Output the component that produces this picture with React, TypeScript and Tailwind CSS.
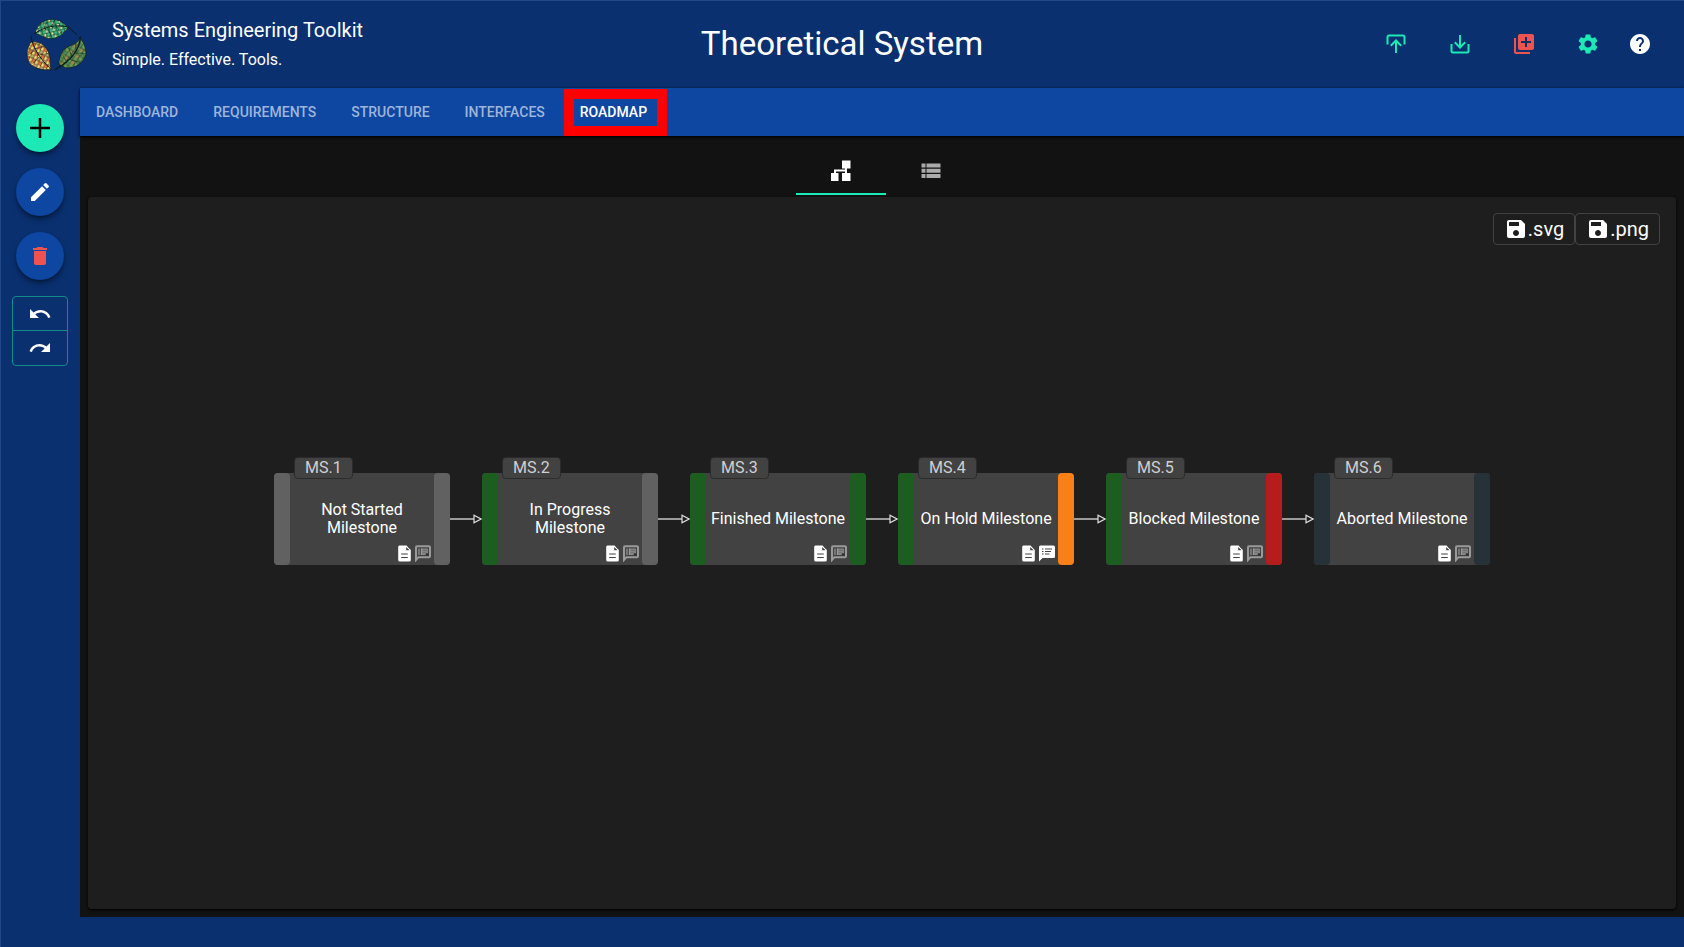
import { useState, JSX } from "react";
import { MdDelete, MdEdit, MdHelp, MdLibraryAdd, MdRedo, MdSave, MdSettings, MdUndo } from "react-icons/md";

interface Milestone {
  id: string;
  name: string;
  startColor: string;
  endColor: string;
  hasComments: boolean;
}

const TABS: string[] = ["Dashboard", "Requirements", "Structure", "Interfaces", "Roadmap"];

const MILESTONES: Milestone[] = [
  { id: "MS.1", name: "Not Started Milestone", startColor: "bg-[#616161]", endColor: "bg-[#616161]", hasComments: false },
  { id: "MS.2", name: "In Progress Milestone", startColor: "bg-[#1b5e20]", endColor: "bg-[#616161]", hasComments: false },
  { id: "MS.3", name: "Finished Milestone", startColor: "bg-[#1b5e20]", endColor: "bg-[#1b5e20]", hasComments: false },
  { id: "MS.4", name: "On Hold Milestone", startColor: "bg-[#1b5e20]", endColor: "bg-[#f98017]", hasComments: true },
  { id: "MS.5", name: "Blocked Milestone", startColor: "bg-[#1b5e20]", endColor: "bg-[#b71c1c]", hasComments: false },
  { id: "MS.6", name: "Aborted Milestone", startColor: "bg-[#263238]", endColor: "bg-[#263238]", hasComments: false },
];

function Logo(): JSX.Element {
  return (
    <svg width="80" height="70" viewBox="4 -4 240 210" aria-hidden="true">
      <defs>
        <pattern id="greenCells" width="22" height="20" patternUnits="userSpaceOnUse" patternTransform="rotate(-14)">
          <rect width="22" height="20" fill="#1d5340" />
          <path d="M0 1l9 0-1 8-8 1zM11 11l8-1 2 8-9 2z" fill="#3cb981" />
          <path d="M10 1l6 1-1 7-6-1zM1 12l8-1-1 7-6 1z" fill="#e3e39a" />
          <path d="M17 1l4 2-1 6-4-1z" fill="#2f9d6c" />
        </pattern>
        <pattern id="autumnCells" width="20" height="22" patternUnits="userSpaceOnUse" patternTransform="rotate(24)">
          <rect width="20" height="22" fill="#6b4a2c" />
          <path d="M0 1l8 1-1 8-7 1zM10 12l8-1 1 8-8 2z" fill="#f3dc78" />
          <path d="M10 1l8 1-1 8-7 1z" fill="#e8703c" />
          <path d="M1 13l7-1-1 8-6 1z" fill="#c3bd80" />
        </pattern>
        <pattern id="oliveCells" width="24" height="22" patternUnits="userSpaceOnUse" patternTransform="rotate(35)">
          <rect width="24" height="22" fill="#3a4c2c" />
          <path d="M0 1l11 1-1 9-9 1zM12 12l10-1 1 9-10 1z" fill="#67a058" />
          <path d="M13 1l9 1-1 8-9 1z" fill="#9c8f50" />
          <path d="M1 13l10-1-1 9-8 1z" fill="#4b8f5a" />
        </pattern>
      </defs>
      <g stroke="#0c1a1c" strokeWidth="2" strokeLinejoin="round" strokeLinecap="round">
        <path d="M61 69C68 42 88 27 112 27C134 27 148 38 160 52C146 72 128 85 108 85C88 85 76 72 61 69Z" fill="url(#greenCells)" />
        <path d="M61 69C92 48 125 42 160 50L186 72" fill="none" strokeWidth="3" />
        <path d="M88 56l8-22M110 49l10-20M98 52l14 30M124 47l16 22" fill="none" strokeWidth="1.500" />
        <path d="M50 94C78 92 96 108 103 130C108 148 106 166 110 178C84 180 60 176 44 158C34 142 34 112 50 94Z" fill="url(#autumnCells)" />
        <path d="M49 78C52 98 62 132 110 178" fill="none" strokeWidth="3" />
        <path d="M58 116l32-8M68 134l34 -4M58 122l-18 12M72 142l-18 18" fill="none" strokeWidth="1.500" />
        <path d="M196 84C210 98 214 116 214 132C206 158 182 176 152 172L133 162C132 132 146 112 172 104C184 100 192 94 196 84Z" fill="url(#oliveCells)" />
        <path d="M197 80C196 112 176 146 122 178" fill="none" strokeWidth="4" />
        <path d="M186 124l-4-22M172 142l-10-30M156 156l-12-22M184 128l28 2M166 148l30 8" fill="none" strokeWidth="1.500" />
      </g>
    </svg>
  );
}

function ImportIcon(): JSX.Element {
  return (
    <svg width="24" height="24" viewBox="0 0 24 24" fill="none" stroke="currentColor" strokeWidth="2">
      <path d="M3.500 12.500V5Q3.500 3.500 5 3.500H19Q20.500 3.500 20.500 5V12.500" />
      <path d="M12 21V9M6.800 13.700L12 8.500L17.200 13.700" />
    </svg>
  );
}

function ExportIcon(): JSX.Element {
  return (
    <svg width="24" height="24" viewBox="0 0 24 24" fill="none" stroke="currentColor" strokeWidth="2">
      <path d="M3.500 12V19Q3.500 20.500 5 20.500H19Q20.500 20.500 20.500 19V12" />
      <path d="M12 3V15M6.800 10.300L12 15.500L17.200 10.300" />
    </svg>
  );
}

function TreeIcon(): JSX.Element {
  return (
    <svg width="24" height="24" viewBox="0 0 24 24" fill="currentColor">
      <path d="M13 1.500h8.500v8H18V14h3.500v8H13v-8h3v-1.500H7V14h2.500v8H2v-8h3v-3.500h11v-1h-3z" />
    </svg>
  );
}

function ListIcon(): JSX.Element {
  return (
    <svg width="24" height="24" viewBox="0 0 24 24" fill="currentColor">
      <path d="M2.500 4.500h4v4h-4zM7.500 4.500h14v4h-14zM2.500 9.800h4v4h-4zM7.500 9.800h14v4h-14zM2.500 15.100h4v4h-4zM7.500 15.100h14v4h-14z" />
    </svg>
  );
}

function DocumentIcon(): JSX.Element {
  return (
    <svg width="13" height="17" viewBox="0 0 13 17">
      <path d="M1.500 0.500H8.500L12.800 5V15Q12.800 16.500 11.300 16.500H1.700Q0.200 16.500 0.200 15V2Q0.200 0.500 1.500 0.500Z" fill="#fff" />
      <path d="M8.200 2V5.300H11.500Z" fill="#424242" />
      <path d="M3.200 9H9.800M3.200 12.500H9.800" stroke="#424242" strokeWidth="1.200" />
    </svg>
  );
}

function CommentIcon({ active }: { active: boolean }): JSX.Element {
  if (active) {
    return (
      <svg width="16" height="17" viewBox="0 0 16 17">
        <path d="M1.500 0.500H14.500Q16 0.500 16 2V11.500Q16 13 14.500 13H3.500L0 16.500V2Q0 0.500 1.500 0.500Z" fill="#fff" />
        <path d="M3 4H4.500M3 6.500H4.500M3 9H4.500M6 4H13M6 6.500H12M6 9H10.500" stroke="#424242" strokeWidth="1" />
      </svg>
    );
  }
  return (
    <svg width="16" height="17" viewBox="0 0 16 17" fill="none" stroke="#9a9a9a">
      <path d="M1 15V2.200Q1 1.300 2 1.300H14Q15 1.300 15 2.200V11.300Q15 12.200 14 12.200H3.500Z" strokeWidth="2" />
      <path d="M6 3.500H13V10H6Z" fill="#858585" stroke="none" />
      <path d="M4 3.500V10M6.500 3.500V10" strokeWidth="1.200" />
      <path d="M8 5.500H12M8 7.500H10.500" stroke="#6a6a6a" strokeWidth="0.800" />
      <path d="M10.800 8.300h2.500v2.200h-2.500z" fill="#2e2e2e" stroke="none" />
    </svg>
  );
}

function Arrow(): JSX.Element {
  return (
    <svg width="32" height="10" viewBox="0 0 32 10" className="shrink-0" fill="none" stroke="#e0e0e0">
      <path d="M0 5H24" strokeWidth="1.300" />
      <path d="M24 1.200L31 5L24 8.800Z" strokeWidth="1.200" />
    </svg>
  );
}

function MilestoneCard({ milestone }: { milestone: Milestone }): JSX.Element {
  return (
    <article className="relative flex h-[92px] w-44 shrink-0 rounded-sm bg-[#424242]">
      <span className={`w-4 shrink-0 rounded-sm ${milestone.startColor}`} />
      <h2 className="flex flex-1 items-center justify-center text-center text-base leading-[18px] text-white">
        {milestone.name}
      </h2>
      <span className={`w-4 shrink-0 rounded-sm ${milestone.endColor}`} />
      <span className="absolute -top-4 left-5 flex h-[22px] items-center rounded-sm border border-[#2b2b2b] bg-[#424242] px-2.5 text-base text-[#d0d0d0]">
        {milestone.id}
      </span>
      <span className="absolute right-[19px] bottom-[3px] flex gap-1">
        <DocumentIcon />
        <CommentIcon active={milestone.hasComments} />
      </span>
    </article>
  );
}

function Header(): JSX.Element {
  return (
    <header className="grid h-[88px] grid-cols-[1fr_auto_1fr] items-center px-4 text-white">
      <div className="flex items-center gap-4">
        <Logo />
        <div className="pt-0.5">
          <p className="text-xl leading-[30px]">Systems Engineering Toolkit</p>
          <p className="text-base leading-[30px]">Simple. Effective. Tools.</p>
        </div>
      </div>
      <h1 className="text-[33px] leading-10">Theoretical System</h1>
      <div className="flex items-center justify-end gap-4 pr-4">
        <button type="button" aria-label="Import" className="p-3 text-[#1de9b6]">
          <ImportIcon />
        </button>
        <button type="button" aria-label="Export" className="p-3 text-[#1de9b6]">
          <ExportIcon />
        </button>
        <button type="button" aria-label="New system" className="p-3 text-[#ef5350]">
          <MdLibraryAdd size={24} />
        </button>
        <button type="button" aria-label="Settings" className="p-3 text-[#1de9b6]">
          <MdSettings size={24} />
        </button>
        <button type="button" aria-label="Help">
          <MdHelp size={24} />
        </button>
      </div>
    </header>
  );
}

function Sidebar(): JSX.Element {
  return (
    <aside className="flex w-20 shrink-0 flex-col items-center gap-4 pt-4 text-white">
      <button
        type="button"
        aria-label="Add"
        className="flex size-12 items-center justify-center rounded-full bg-[#1de9b6] text-black shadow-md shadow-black/40"
      >
        <svg width="20" height="20" viewBox="0 0 20 20" stroke="currentColor" strokeWidth="2.500">
          <path d="M10 0V20M0 10H20" />
        </svg>
      </button>
      <button
        type="button"
        aria-label="Edit"
        className="flex size-12 items-center justify-center rounded-full bg-[#0d47a1] shadow-md shadow-black/40"
      >
        <MdEdit size={24} />
      </button>
      <button
        type="button"
        aria-label="Delete"
        className="flex size-12 items-center justify-center rounded-full bg-[#0d47a1] text-[#ef5350] shadow-md shadow-black/40"
      >
        <MdDelete size={24} />
      </button>
      <div className="flex w-14 flex-col divide-y divide-[#158a8a] rounded border border-[#158a8a]">
        <button type="button" aria-label="Undo" className="flex h-[34px] items-center justify-center">
          <MdUndo size={24} />
        </button>
        <button type="button" aria-label="Redo" className="flex h-[34px] items-center justify-center">
          <MdRedo size={24} />
        </button>
      </div>
    </aside>
  );
}

function App(): JSX.Element {
  const [tab, setTab] = useState<string>("Roadmap");
  const [view, setView] = useState<"tree" | "list">("tree");

  return (
    <div className="flex min-h-screen flex-col bg-[#0a306f] font-[Roboto,sans-serif] shadow-[inset_1px_1px_0_#1f4884]">
      <Header />
      <div className="flex flex-1">
        <Sidebar />
        <main className="flex min-w-0 flex-1 flex-col bg-[#121212]">
          <nav className="flex h-12 gap-[3px] bg-[#0d47a1] shadow-sm shadow-black">
            {TABS.map((name) => (
              <button
                key={name}
                type="button"
                onClick={(): void => setTab(name)}
                className={`relative px-4 text-sm font-medium uppercase ${tab === name ? "text-white" : "text-[#9eb5d9]"}`}
              >
                {name}
                {tab === name && <span className="absolute top-px -right-1 bottom-0 left-0 border-10 border-[#ff0000]" />}
              </button>
            ))}
          </nav>
          <div className="flex justify-center pt-[11px] pb-0.5 pl-2">
            <button
              type="button"
              aria-label="Diagram view"
              onClick={(): void => setView("tree")}
              className={`flex h-12 w-[90px] items-center justify-center border-y-2 border-t-transparent ${view === "tree" ? "border-b-[#1de9b6] text-white" : "border-b-transparent text-[#aaaaaa]"}`}
            >
              <TreeIcon />
            </button>
            <button
              type="button"
              aria-label="List view"
              onClick={(): void => setView("list")}
              className={`flex h-12 w-[90px] items-center justify-center border-y-2 border-t-transparent ${view === "list" ? "border-b-[#1de9b6] text-white" : "border-b-transparent text-[#aaaaaa]"}`}
            >
              <ListIcon />
            </button>
          </div>
          <section className="relative mx-2 mb-2 flex flex-1 items-center justify-center rounded bg-[#1e1e1e] pb-17 shadow-sm shadow-black">
            <div className="absolute top-4 right-4 flex text-xl text-white">
              <button type="button" className="flex h-8 items-center rounded border border-[#424242] px-2.5">
                <MdSave size={24} />
                .svg
              </button>
              <button type="button" className="flex h-8 items-center rounded border border-[#424242] px-2.5">
                <MdSave size={24} />
                .png
              </button>
            </div>
            {MILESTONES.map((milestone, i) => (
              <div key={milestone.id} className="flex items-center">
                {i > 0 && <Arrow />}
                <MilestoneCard milestone={milestone} />
              </div>
            ))}
          </section>
        </main>
      </div>
      <footer className="h-[30px]" />
    </div>
  );
}

export default App;
